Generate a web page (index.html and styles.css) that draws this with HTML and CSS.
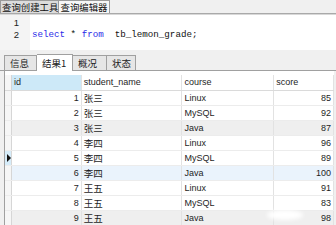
FILE: index.html
```html
<!DOCTYPE html>
<html>
<head>
<meta charset="utf-8">
<link rel="stylesheet" href="styles.css">
</head>
<body>
<div class="app">
  <div class="topbar">
    <div class="ttab">查询创建工具</div>
    <div class="ttab active">查询编辑器</div>
  </div>
  <div class="editor">
    <div class="gutter"><div class="ln">1</div><div class="ln">2</div></div>
    <div class="code"><div class="ln">&nbsp;</div><div class="ln"><span class="kw">select</span> * <span class="kw">from</span>  tb_lemon_grade;</div></div>
  </div>
  <div class="midbar"></div>
  <div class="restabs">
    <div class="rtab t1">信息</div>
    <div class="rtab t2 active">结果1</div>
    <div class="rtab t3">概况</div>
    <div class="rtab t4">状态</div>
  </div>
  <div class="gridwrap">
    <div class="grid">
      <div class="row head">
        <div class="rh"></div>
        <div class="c id sel">id</div>
        <div class="c name">student_name</div>
        <div class="c course">course</div>
        <div class="c score">score</div>
      </div>
      <div class="row"><div class="rh"></div><div class="c id r">1</div><div class="c name">张三</div><div class="c course">Linux</div><div class="c score r">85</div></div>
      <div class="row"><div class="rh"></div><div class="c id r">2</div><div class="c name">张三</div><div class="c course">MySQL</div><div class="c score r">92</div></div>
      <div class="row alt"><div class="rh"></div><div class="c id r">3</div><div class="c name">张三</div><div class="c course">Java</div><div class="c score r">87</div></div>
      <div class="row"><div class="rh"></div><div class="c id r">4</div><div class="c name">李四</div><div class="c course">Linux</div><div class="c score r">96</div></div>
      <div class="row"><div class="rh cur"><span class="arrow"></span></div><div class="c id r">5</div><div class="c name">李四</div><div class="c course">MySQL</div><div class="c score r">89</div></div>
      <div class="row hover"><div class="rh"></div><div class="c id r">6</div><div class="c name">李四</div><div class="c course">Java</div><div class="c score r">100</div></div>
      <div class="row"><div class="rh"></div><div class="c id r">7</div><div class="c name">王五</div><div class="c course">Linux</div><div class="c score r">91</div></div>
      <div class="row"><div class="rh"></div><div class="c id r">8</div><div class="c name">王五</div><div class="c course">MySQL</div><div class="c score r">83</div></div>
      <div class="row alt"><div class="rh"></div><div class="c id r">9</div><div class="c name">王五</div><div class="c course">Java</div><div class="c score r">98</div></div>
    </div>
    <div class="blob"></div>
  </div>
</div>
</body>
</html>
```
FILE: styles.css
```css
html, body {
  margin: 0;
  padding: 0;
}
body {
  width: 336px;
  height: 225px;
  overflow: hidden;
  background: #f0f0f0;
  font-family: "Liberation Sans", "Noto Sans CJK SC", sans-serif;
  color: #1e1e1e;
}
.app {
  display: flex;
  flex-direction: column;
  height: 225px;
}
.topbar {
  height: 13px;
  display: flex;
  align-items: flex-end;
  background: #f0f0f0;
  border-bottom: 1px solid #a9a9a9;
  box-shadow: 0 1px 0 #d8d8d8;
}
.ttab {
  height: 13px;
  box-sizing: border-box;
  padding: 0 1px;
  font-family: "Noto Sans CJK SC", sans-serif;
  font-size: 9.4px;
  line-height: 12px;
  color: #111;
  border: 1px solid #9a9a9a;
  border-bottom: none;
  background: #dcdcdc;
  width: 59px;
  text-align: center;
  white-space: nowrap;
  overflow: hidden;
}
.ttab.active {
  background: #f7f7f7;
  width: 51px;
  border-left: none;
}
.editor {
  margin-top: 1px;
  height: 35px;
  background: #fff;
  display: flex;
  font-family: "Liberation Mono", monospace;
  font-size: 9.2px;
}
.ln {
  height: 11.5px;
  line-height: 11.5px;
}
.gutter {
  width: 30px;
  background: #f4f4f4;
  box-sizing: border-box;
  padding-top: 2px;
  padding-right: 11px;
  text-align: right;
  color: #222;
  font-family: "Liberation Sans", sans-serif;
  font-size: 9.5px;
}
.code {
  padding-top: 2px;
  padding-left: 2px;
  color: #111;
  white-space: pre;
}
.kw {
  color: #2a2ae8;
}
.midbar {
  height: 4px;
  background: #f0f0f0;
}
.restabs {
  height: 16px;
  display: flex;
  align-items: flex-end;
  padding-left: 4px;
  border-bottom: 1px solid #a0a0a0;
}
.rtab {
  height: 15px;
  box-sizing: border-box;
  padding-left: 5px;
  font-family: "Noto Sans CJK SC", sans-serif;
  font-size: 9.5px;
  line-height: 14px;
  color: #222;
  border: 1px solid #a0a0a0;
  border-bottom: none;
  border-left: none;
  background: #e6e6e6;
  white-space: nowrap;
}
.t1 {
  border-left: 1px solid #a0a0a0;
  width: 33px;
}
.t2 { width: 36px; }
.t3 { width: 34px; }
.t4 { width: 29px; }
.rtab.active {
  height: 17px;
  margin-bottom: -1px;
  background: #fff;
  padding-top: 1px;
}
.gridwrap {
  position: relative;
  flex: 1;
  margin-left: 4px;
  margin-right: 2px;
  padding-top: 4px;
  background: #fff;
  border-left: 1px solid #a0a0a0;
  overflow: hidden;
}
.grid {
  display: flex;
  flex-direction: column;
}
.row {
  display: flex;
  height: 15px;
  box-sizing: border-box;
  border-bottom: 1px solid #ececec;
  background: #fff;
}
.row.head {
  height: 16px;
  border-bottom: 1px solid #dadada;
}
.row.alt {
  background: #efefef;
}
.row.hover {
  background: #eaf3fc;
}
.rh {
  width: 6px;
  background: #f6f6f6;
  border-right: 1px solid #d6d6d6;
  position: relative;
}
.rh.cur {
  background: #d6ecf9;
}
.arrow {
  position: absolute;
  left: 2px;
  top: 3px;
  width: 0;
  height: 0;
  border-top: 4px solid transparent;
  border-bottom: 4px solid transparent;
  border-left: 4px solid #111;
}
.c {
  box-sizing: border-box;
  border-right: 1px solid #e2e2e2;
  font-size: 9px;
  line-height: 14px;
  padding: 0 2px;
  white-space: nowrap;
  overflow: hidden;
}
.row.head .c {
  line-height: 15px;
}
.c.sel {
  background: #cde9f8;
}
.c.r {
  text-align: right;
}
.id { width: 70px; }
.name { width: 101px; font-family: "Noto Sans CJK SC", "Liberation Sans", sans-serif; font-size: 9.5px; }
.row.head .name { font-family: "Liberation Sans", sans-serif; font-size: 9px; }
.course { width: 92px; }
.score { width: 60px; }
.blob {
  position: absolute;
  left: 262px;
  top: 139px;
  width: 36px;
  height: 10px;
  border-radius: 50%;
  background: #fff;
  filter: blur(2px);
}
```
